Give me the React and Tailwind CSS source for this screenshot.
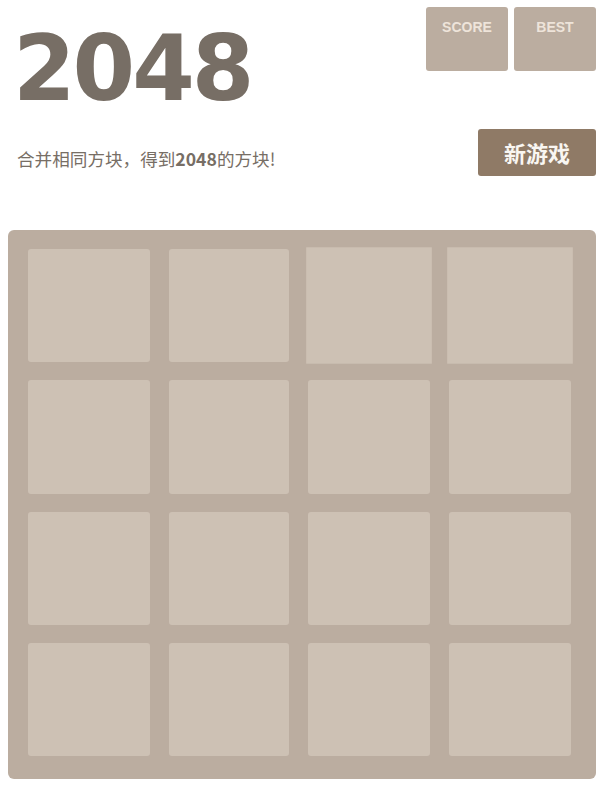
export default function App() {
  const cells = Array.from({ length: 16 }, (_, i) => i);
  return (
    <div className="w-[600px] h-[800px] bg-white pl-[8px] pr-[4px]" style={{ fontFamily: '"Liberation Sans", "Noto Sans CJK SC", sans-serif' }}>
      <div className="h-[129px] flex justify-between items-start">
        <h1 className="mt-[24px] ml-[5px] text-[90px] leading-none font-bold tracking-[-3px] text-[#776e65]" style={{ fontFamily: '"DejaVu Sans", sans-serif' }}>2048</h1>
        <div className="mt-[7px] flex gap-[6px]">
          <div className="w-[82px] h-[64px] bg-[#bbada0] rounded-[3px] pt-[12px] text-center text-[14px] leading-[16px] font-bold text-[#eee4da] uppercase">Score</div>
          <div className="w-[82px] h-[64px] bg-[#bbada0] rounded-[3px] pt-[12px] text-center text-[14px] leading-[16px] font-bold text-[#eee4da] uppercase">Best</div>
        </div>
      </div>
      <div className="h-[47px] flex justify-between items-center">
        <p className="ml-[9px] pt-[13px] text-[17.6px] leading-[24px] text-[#776e65]" style={{ fontFamily: '"Noto Sans CJK SC", sans-serif' }}>合并相同方块，得到<b className="font-bold">2048</b>的方块!</p>
        <button className="w-[118px] h-[47px] bg-[#8f7a66] rounded-[3px] text-[22px] font-bold text-[#f9f6f2]" style={{ fontFamily: '"Noto Sans CJK SC", sans-serif' }}>新游戏</button>
      </div>
      <div className="mt-[54px] w-[588px] h-[549px] bg-[#bbada0] rounded-[6px] pl-[20px] pr-[24px] pt-[19px] pb-[23px] grid grid-cols-[122px_120px_122px_122px] grid-rows-4 gap-x-[19px] gap-y-[18px]">
        {cells.map((i) => (
          <div
            key={i}
            className={
              i === 2 || i === 3
                ? "bg-[#cdc1b4] scale-[1.03]"
                : "bg-[#cdc1b4] rounded-[3px]"
            }
          />
        ))}
      </div>
    </div>
  );
}
